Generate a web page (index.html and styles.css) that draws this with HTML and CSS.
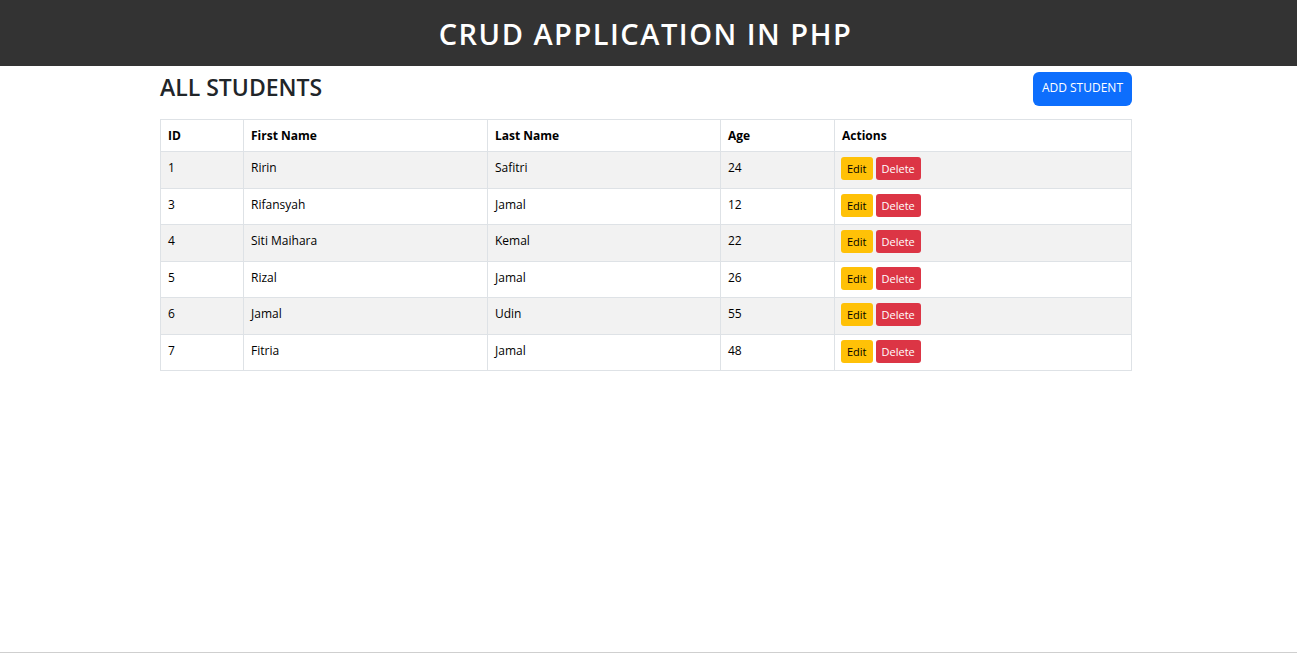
FILE: index.html
```html
<!DOCTYPE html>
<html lang="en">
<head>
<meta charset="utf-8">
<title>CRUD Application in PHP</title>
<link rel="stylesheet" href="styles.css">
</head>
<body>
<header class="topbar">
  <h1 class="topbar-title">CRUD APPLICATION IN PHP</h1>
</header>
<main class="container">
  <div class="page-head">
    <h2 class="page-title">ALL STUDENTS</h2>
    <a class="btn btn-primary" href="#">ADD STUDENT</a>
  </div>
  <table class="students">
    <colgroup>
      <col class="c-id"><col class="c-first"><col class="c-last"><col class="c-age"><col class="c-act">
    </colgroup>
    <thead>
      <tr><th>ID</th><th>First Name</th><th>Last Name</th><th>Age</th><th>Actions</th></tr>
    </thead>
    <tbody>
      <tr><td>1</td><td>Ririn</td><td>Safitri</td><td>24</td><td><a class="btn btn-sm btn-warning" href="#">Edit</a><a class="btn btn-sm btn-danger" href="#">Delete</a></td></tr>
      <tr><td>3</td><td>Rifansyah</td><td>Jamal</td><td>12</td><td><a class="btn btn-sm btn-warning" href="#">Edit</a><a class="btn btn-sm btn-danger" href="#">Delete</a></td></tr>
      <tr><td>4</td><td>Siti Maihara</td><td>Kemal</td><td>22</td><td><a class="btn btn-sm btn-warning" href="#">Edit</a><a class="btn btn-sm btn-danger" href="#">Delete</a></td></tr>
      <tr><td>5</td><td>Rizal</td><td>Jamal</td><td>26</td><td><a class="btn btn-sm btn-warning" href="#">Edit</a><a class="btn btn-sm btn-danger" href="#">Delete</a></td></tr>
      <tr><td>6</td><td>Jamal</td><td>Udin</td><td>55</td><td><a class="btn btn-sm btn-warning" href="#">Edit</a><a class="btn btn-sm btn-danger" href="#">Delete</a></td></tr>
      <tr><td>7</td><td>Fitria</td><td>Jamal</td><td>48</td><td><a class="btn btn-sm btn-warning" href="#">Edit</a><a class="btn btn-sm btn-danger" href="#">Delete</a></td></tr>
    </tbody>
  </table>
</main>
</body>
</html>
```

FILE: styles.css
```css
* { box-sizing: border-box; }
html, body { height: 100%; }
body {
  margin: 0;
  min-height: 100vh;
  font-family: "Open Sans", "Noto Sans", sans-serif;
  color: #212529;
  background: #fff;
  border-bottom: 1px solid #cfcfcf;
}
.topbar {
  background: #333333;
  height: 66px;
  display: flex;
  align-items: center;
  justify-content: center;
  padding-right: 6px;
}
.topbar-title {
  margin: 0;
  color: #fff;
  font-size: 29px;
  font-weight: 600;
  letter-spacing: 1.5px;
  line-height: 1;
}
.container {
  width: 972px;
  margin: 0 auto 0 160px;
}
.page-head {
  display: flex;
  justify-content: space-between;
  align-items: flex-start;
  padding-top: 6px;
  margin-bottom: 13px;
}
.page-title {
  margin: 0;
  font-size: 23px;
  font-weight: 600;
  line-height: 30px;
  color: #212529;
}
.btn {
  display: inline-block;
  text-decoration: none;
  border-radius: 5px;
  line-height: 1;
}
.btn-primary {
  background: #0d6efd;
  color: #fff;
  font-size: 12px;
  height: 34px;
  padding: 10px 9px 0;
  border-radius: 6px;
}
.students {
  width: 100%;
  border-collapse: collapse;
  font-size: 12px;
  color: #000;
}
.c-id { width: 83px; }
.c-first { width: 244px; }
.c-last { width: 233px; }
.c-age { width: 114px; }
.students th, .students td {
  border: 1px solid #dee2e6;
  text-align: left;
  vertical-align: top;
  padding: 8px 7px 0;
  line-height: 16px;
}
.students th { font-weight: 700; height: 32px; }
.students td { height: 36.5px; }
.students tbody tr:nth-child(odd) td { background: #f2f2f2; }
.students td:last-child { padding: 5px 6px 0; }
.btn-sm {
  font-size: 11px;
  height: 23px;
  padding: 6px 6px 0;
  margin-right: 3px;
  border-radius: 3px;
}
.btn-warning { background: #ffc107; color: #000; }
.btn-danger { background: #dc3545; color: #fff; }
```
